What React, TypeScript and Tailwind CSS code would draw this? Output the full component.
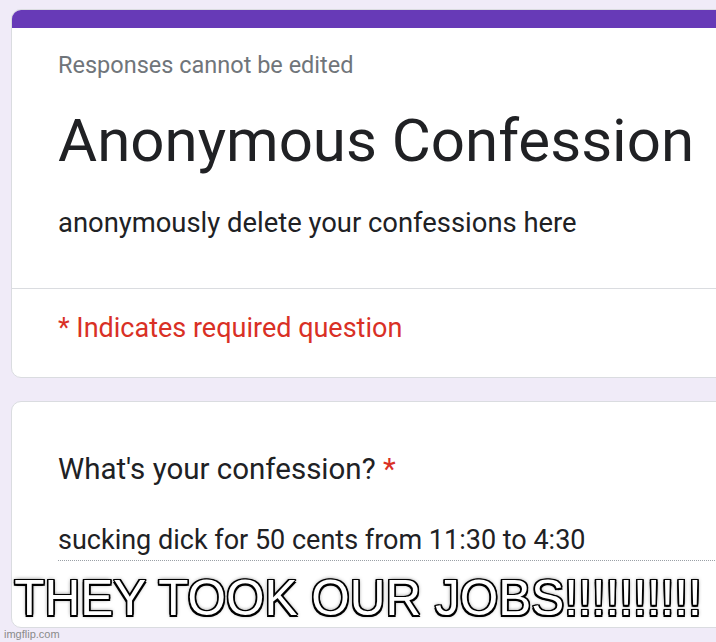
import React from "react";

const roboto = "font-['Roboto','Liberation_Sans',sans-serif]";

const App: React.FC = () => {
  return (
    <div className="relative w-[716px] h-[642px] overflow-hidden bg-[#f0ebf8]">
      <div className={`flex flex-col gap-[23px] pt-[9px] pl-[11px] w-[800px] ${roboto}`}>
        {/* header card */}
        <div className="flex flex-col rounded-[10px] overflow-hidden border border-[#dadce0] bg-white">
          <div className="h-[19px] bg-[#673ab7] -mx-px -mt-px" />
          <div className="flex flex-col px-[46px] pt-[23px]">
            <div className="text-[23.5px] leading-[28px] text-[#70757a]">Responses cannot be edited</div>
            <h1 className="mt-[24px] text-[60px] leading-[76px] text-[#202124]">Anonymous Confession</h1>
            <div className="mt-[28px] text-[27.4px] leading-[32px] text-[#202124]">
              anonymously delete your confessions here
            </div>
          </div>
          <div className="mt-[49px] h-px bg-[#dadce0]" />
          <div className="px-[46px] pt-[23px] pb-[33px] text-[27px] leading-[32px] text-[#d93025]">
            * Indicates required question
          </div>
        </div>

        {/* question card */}
        <div className="flex flex-col h-[227px] rounded-[10px] border border-[#dadce0] bg-white px-[46px] pt-[51px]">
          <div className="text-[29.5px] leading-[32px] text-[#202124]">
            What's your confession? <span className="text-[#d93025]">*</span>
          </div>
          <div className="mt-[39px] pb-[4px] border-b border-dotted border-[#9aa0a6] text-[27px] leading-[32px] text-[#202124]">
            sucking dick for 50 cents from 11:30 to 4:30
          </div>
        </div>
      </div>

      {/* meme caption */}
      <div className="absolute left-0 right-0 top-[568px] flex justify-center">
        <div className="font-['Liberation_Sans',Arial,sans-serif] text-[49.5px] leading-[60px] text-white whitespace-nowrap [text-shadow:1.5px_1.5px_0_#000,-1.5px_-1.5px_0_#000,1.5px_-1.5px_0_#000,-1.5px_1.5px_0_#000,0_1.5px_0_#000,1.5px_0_0_#000,-1.5px_0_0_#000,0_-1.5px_0_#000,0_0_4px_rgba(0,0,0,0.8)]">
          THEY TOOK OUR JOBS!!!!!!!!!!
        </div>
      </div>

      <div className="absolute left-[4px] bottom-[1px] font-['Liberation_Sans',Arial,sans-serif] text-[11px] leading-[13px] text-[#8a8a8a]">
        imgflip.com
      </div>
    </div>
  );
};

export default App;
